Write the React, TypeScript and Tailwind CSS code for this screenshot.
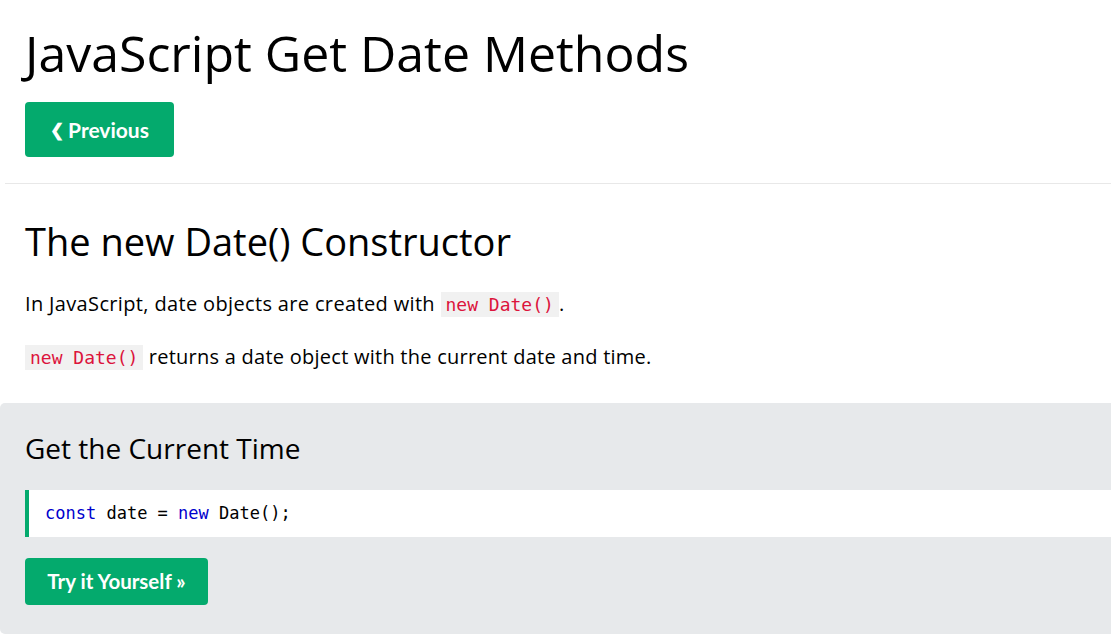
import React from "react";

const sans = "font-['Segoe_UI','Open_Sans','Noto_Sans',sans-serif]";
const mono = "font-['Consolas','DejaVu_Sans_Mono',monospace]";
const btnFont = "font-['Source_Sans_Pro','Lato',sans-serif]";

const Code: React.FC<{ children: React.ReactNode }> = ({ children }) => (
  <code className={`${mono} bg-[#f1f1f1] text-[#dc143c] text-[18px] tracking-normal px-[5px] py-[2px]`}>{children}</code>
);

export default function App() {
  return (
    <div className="w-[1111px] h-[644px] overflow-hidden bg-white text-black">
      <div className="pl-[25px] pt-[20px]">
        <h1 className={`${sans} text-[50px] leading-[66px] font-normal`}>JavaScript Get Date Methods</h1>
        <button
          className={`${btnFont} mt-[16px] w-[149px] h-[55px] rounded-[4px] bg-[#04AA6D] text-white text-[21px] font-bold flex items-center justify-center gap-[4px]`}
        >
          <span className="text-[17px] leading-none">❮</span>
          <span>Previous</span>
        </button>
      </div>

      <hr className="ml-[5px] mt-[26px] border-0 h-px bg-[#e8e8e8]" />

      <div className="pl-[25px] pt-[32px]">
        <h2 className={`${sans} text-[38px] leading-[50px] font-normal`}>The new Date() Constructor</h2>
        <p className={`${sans} text-[20px] tracking-[0.35px] mt-[22px] leading-[32px]`}>
          In JavaScript, date objects are created with <Code>new Date()</Code>.
        </p>
        <p className={`${sans} text-[20px] tracking-[0.25px] mt-[20px] leading-[32px]`}>
          <Code>new Date()</Code> returns a date object with the current date and time.
        </p>
      </div>

      <div className="mt-[29px] bg-[#E7E9EB] rounded-l-[5px] pl-[25px] pt-[23px] pb-[29px]">
        <h3 className={`${sans} text-[28px] leading-[44px] font-normal`}>Get the Current Time</h3>
        <div className={`${mono} mt-[20px] bg-white border-l-[4px] border-[#04AA6D] h-[47px] flex items-center pl-[16px] text-[17px]`}>
          <span className="text-[#0000cd]">const</span>&nbsp;date&nbsp;=&nbsp;<span className="text-[#0000cd]">new</span>&nbsp;Date();
        </div>
        <button
          className={`${btnFont} mt-[21px] w-[183px] h-[47px] rounded-[4px] bg-[#04AA6D] text-white text-[20.5px] font-bold`}
        >
          Try it Yourself »
        </button>
      </div>
    </div>
  );
}
